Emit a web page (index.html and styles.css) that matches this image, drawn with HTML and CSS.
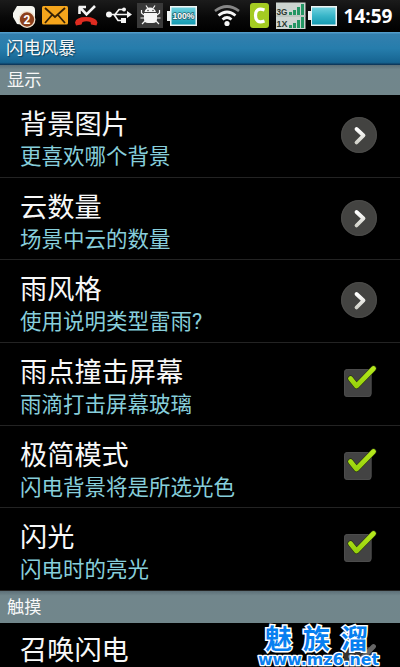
FILE: index.html
```html
<!DOCTYPE html>
<html lang="zh-CN">
<head>
<meta charset="utf-8">
<title>闪电风暴</title>
<link rel="stylesheet" href="styles.css">
</head>
<body>
<svg width="0" height="0" class="defs">
  <defs>
    <linearGradient id="batt" x1="0" y1="0" x2="0" y2="1"><stop offset="0" stop-color="#70d2df"/><stop offset=".5" stop-color="#38b5c8"/><stop offset="1" stop-color="#169ab2"/></linearGradient>
    <linearGradient id="tick" x1="0" y1="0" x2="0" y2="1"><stop offset="0" stop-color="#b4e81c"/><stop offset="1" stop-color="#98d20c"/></linearGradient>
    <linearGradient id="mark" x1="0" y1="0" x2="0" y2="1"><stop offset="0" stop-color="#fff"/><stop offset="1" stop-color="#d3d3cb"/></linearGradient>
    <symbol id="arrow" viewBox="0 0 40 40"><circle cx="20" cy="20" r="18" fill="#434341"/><circle cx="20" cy="20" r="17.3" fill="none" stroke="#4b4b49"/><path d="M17.500 14l7 6.500-7 7" fill="none" stroke="url(#mark)" stroke-width="3.800" stroke-linecap="round" stroke-linejoin="round"/></symbol>
    <symbol id="check" viewBox="0 0 40 40"><rect x="5" y="9" width="27.500" height="28" rx="3.500" fill="#434343"/><rect x="5.500" y="9.500" width="26.500" height="27" rx="3" fill="none" stroke="#4c4c4c"/><path d="M11.500 18.500l6 7.500L34.500 8.500" fill="none" stroke="#26330c" stroke-width="6" stroke-linecap="round" stroke-linejoin="round"/><path d="M11.500 18.500l6 7.500L34.500 8.500" fill="none" stroke="url(#tick)" stroke-width="4.800" stroke-linecap="round" stroke-linejoin="round"/></symbol>
    <symbol id="unchecked" viewBox="0 0 40 40"><rect x="5" y="9" width="27.500" height="28" rx="3.500" fill="#333"/><path d="M11.500 18.500l6 7.500L34.500 8.500" fill="none" stroke="#666" stroke-width="4.800" stroke-linecap="round" stroke-linejoin="round"/></symbol>
  </defs>
</svg>
<div class="screen">
  <header class="status">
    <svg width="400" height="32" viewBox="0 0 400 32">
      <path d="M17 6h14q4 0 4 4v8L24 25 17 24 13 17v-4z" fill="#f5f5f0"/>
      <circle cx="27" cy="19.500" r="7.800" fill="#8c401c" stroke="#efe1cf" stroke-width="1.300"/>
      <text x="27" y="24" class="badge">2</text>
      <rect x="42" y="6" width="26" height="18.500" rx="1.500" fill="#f5a51c"/>
      <path d="M45 8l10 9 10-9M45 23l7-8M65 23l-7-8" fill="none" stroke="#352005" stroke-width="1.800"/>
      <path d="M79.500 14V7M78.500 7H86M80 7.500l6.500 7L95 6" fill="none" stroke="#f4f4f4" stroke-width="2.600"/>
      <path d="M75 22.500q1-5.500 11-5.500t11.500 5.500l-1 3-5.500-1-.5-2.500q-4-1.500-8 0l-1 2.500-5.500 1z" fill="#df2b20"/>
      <path d="M109 14.500h19M112 14.500h3l4-5h5M114 14.500l4 6h5" fill="none" stroke="#f5f5f5" stroke-width="1.700"/>
      <circle cx="109" cy="14.500" r="3" fill="#f5f5f5"/><circle cx="124" cy="9.500" r="2" fill="#f5f5f5"/><path d="M121 18h5v5h-5zM127 11l5 3.500-5 3.500z" fill="#f5f5f5"/>
      <rect x="137" y="3" width="26" height="25" fill="#393939"/>
      <path d="M144.500 12q1-4.500 5.500-4.500t6 4.500zM144 13h13v6q0 4-4 4h-5q-4 0-4-4z" fill="#f5f5f5"/>
      <path d="M146 5.500l2 3M155 5.500l-2 3M144 15l-2.500-2v-3M157 15l2.500-2v-3M144 18h-3.500M157 18h3.500M145 21l-3 3M156 21l3 3" fill="none" stroke="#f5f5f5" stroke-width="1.200"/>
      <circle cx="148" cy="10.500" r=".7" fill="#222"/><circle cx="153" cy="10.500" r=".7" fill="#222"/>
      <path d="M170 6h27v20h-27v-5h-3v-10h3z" fill="#f0f5f5"/><rect x="171.500" y="7.500" width="24" height="17" fill="url(#batt)"/>
      <text x="172.500" y="19.300" textLength="22" lengthAdjust="spacingAndGlyphs" class="percent">100%</text>
      <g fill="none" stroke-width="2.700"><path d="M215 11q12-9 24 0" stroke="#868686"/><path d="M218.500 15.500q8.500-7 17 0M222.500 19.500q4.500-4 9 0" stroke="#f5f5f5"/></g><circle cx="227" cy="23.500" r="2.600" fill="#f5f5f5"/>
      <rect x="250" y="3" width="19" height="25" rx="3" fill="#a4cb22"/><path d="M264.500 10q-9-3-9 5.500t9 5.500" fill="none" stroke="#fff" stroke-width="3.200"/>
      <rect x="276" y="2.500" width="29.500" height="26.500" fill="#cdd5d0"/><rect x="276" y="15.500" width="29.500" height="1" fill="#aeb8b2"/>
      <text x="276.500" y="14.500" textLength="11" lengthAdjust="spacingAndGlyphs" class="network">3G</text><text x="276.500" y="27" textLength="11" lengthAdjust="spacingAndGlyphs" class="network">1X</text>
      <path d="M289 12h3v3h-3zM293 10h3v5h-3zM297 7h3v8h-3zM301 4h3v11h-3zM289 25h3v3h-3zM293 23h3v5h-3zM297 20h3v8h-3zM301 17h3v11h-3z" fill="#239663"/>
      <path d="M311 6h26v20h-26v-6h-3v-9h3z" fill="#eef3f3"/><rect x="312" y="7.500" width="23.500" height="17" fill="url(#batt)"/>
      <text x="343.500" y="22.500" textLength="49" lengthAdjust="spacingAndGlyphs" class="clock">14:59</text>
    </svg>
  </header>
  <h1 class="title">闪电风暴</h1>
  <h2 class="section">显示</h2>
  <main>
    <div class="row"><div><div class="name">背景图片</div><div class="summary">更喜欢哪个背景</div></div><svg class="icon"><use href="#arrow"/></svg></div>
    <div class="row"><div><div class="name">云数量</div><div class="summary">场景中云的数量</div></div><svg class="icon"><use href="#arrow"/></svg></div>
    <div class="row"><div><div class="name">雨风格</div><div class="summary">使用说明类型雷雨?</div></div><svg class="icon"><use href="#arrow"/></svg></div>
    <div class="row"><div><div class="name">雨点撞击屏幕</div><div class="summary">雨滴打击屏幕玻璃</div></div><svg class="icon box"><use href="#check"/></svg></div>
    <div class="row"><div><div class="name">极简模式</div><div class="summary">闪电背景将是所选光色</div></div><svg class="icon box"><use href="#check"/></svg></div>
    <div class="row"><div><div class="name">闪光</div><div class="summary">闪电时的亮光</div></div><svg class="icon box"><use href="#check"/></svg></div>
  </main>
  <h2 class="section touch">触摸</h2>
  <div class="row last"><div class="name">召唤闪电</div><svg class="icon box"><use href="#unchecked"/></svg></div>
  <div class="watermark">
    <div class="brand"><span>魅</span><span>族</span><span>溜</span></div>
    <svg width="126" height="17" viewBox="0 0 126 17"><text x="2" y="13.500" textLength="121" lengthAdjust="spacingAndGlyphs" class="url">www.mz6.net</text></svg>
  </div>
</div>
</body>
</html>
```
FILE: styles.css
```css
* { box-sizing: border-box; }
body { margin: 0; background: #000; font-family: Roboto, "Noto Sans CJK SC", sans-serif; color: #f8f8f8; }
.defs { position: absolute; }
.screen { position: relative; width: 400px; height: 667px; overflow: hidden; background: #000; }
.status { height: 32px; background: linear-gradient(#1b1b1b, #080808 55%, #000); }
.status svg { display: block; }
.badge { font: bold 12px Roboto, sans-serif; fill: #fff; text-anchor: middle; }
.percent { font: bold 9.5px "Liberation Sans", sans-serif; fill: #fff; stroke: #28616c; stroke-width: 1.5px; paint-order: stroke; }
.network { font: bold 9px "Liberation Sans", sans-serif; fill: #29382f; }
.clock { font: bold 19px "Open Sans", sans-serif; fill: #fff; }
.title { height: 33px; margin: 0; padding-left: 6px; font-size: 17.4px; font-weight: 400; line-height: 32px; background: linear-gradient(#5aa5d2 0, #337fae 7%, #267dac 50%, #166491 92%, #0b2f50); text-shadow: 1px 1px 1px #123f59; }
.section { height: 30px; margin: 0; padding-left: 7px; font-size: 17.3px; font-weight: 400; line-height: 30px; background: linear-gradient(#5d7078, #71868c 15%, #71868b); }
.row { display: flex; height: 82.7px; padding: 14px 21px 0 20px; justify-content: space-between; border-bottom: 1px solid #232323; }
.name { font-size: 27.2px; line-height: 32px; white-space: nowrap; }
.summary { font-size: 21.5px; line-height: 32px; color: #87cedb; white-space: nowrap; }
.icon { width: 40px; height: 40px; margin-top: 6px; flex: none; }
.box { margin-top: 3px; }
.touch { height: 32px; line-height: 32px; }
.last { border: 0; padding-top: 12px; }
.watermark { position: absolute; left: 256px; top: 624px; width: 126px; }
.watermark svg { display: block; }
.brand { display: flex; gap: 11px; padding-left: 9px; height: 27px; font: 700 27px/27px "Noto Sans CJK SC", sans-serif; color: #087ff0; -webkit-text-stroke: 3px #fff; paint-order: stroke fill; }
.url { font: bold 15px "DejaVu Sans", sans-serif; fill: #087ff0; stroke: #fff; stroke-width: 2.5px; paint-order: stroke; stroke-linejoin: round; }
```
